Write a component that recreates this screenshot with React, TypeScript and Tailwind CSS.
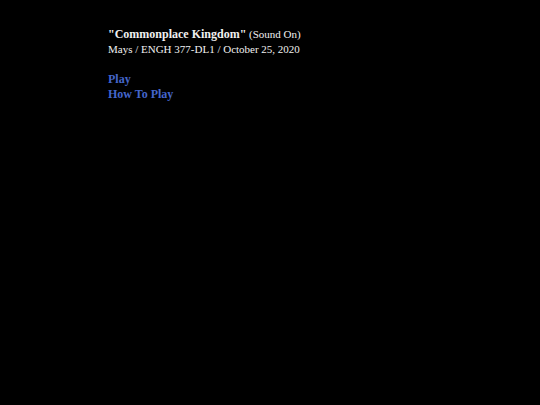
export default function App() {
  return (
    <div className="min-h-[405px] w-full bg-black text-[#f0f0f0] font-['Liberation_Serif',serif]">
      <div className="pl-[108px] pt-[27px] text-[11px] leading-[15px]">
        <div>
          <span className="font-bold text-[12px]">"Commonplace Kingdom"</span> (Sound On)
        </div>
        <div>Mays / ENGH 377-DL1 / October 25, 2020</div>
        <div className="mt-[15px] flex flex-col font-bold text-[12px] text-[#4466cc]">
          <a href="#">Play</a>
          <a href="#">How To Play</a>
        </div>
      </div>
    </div>
  );
}
